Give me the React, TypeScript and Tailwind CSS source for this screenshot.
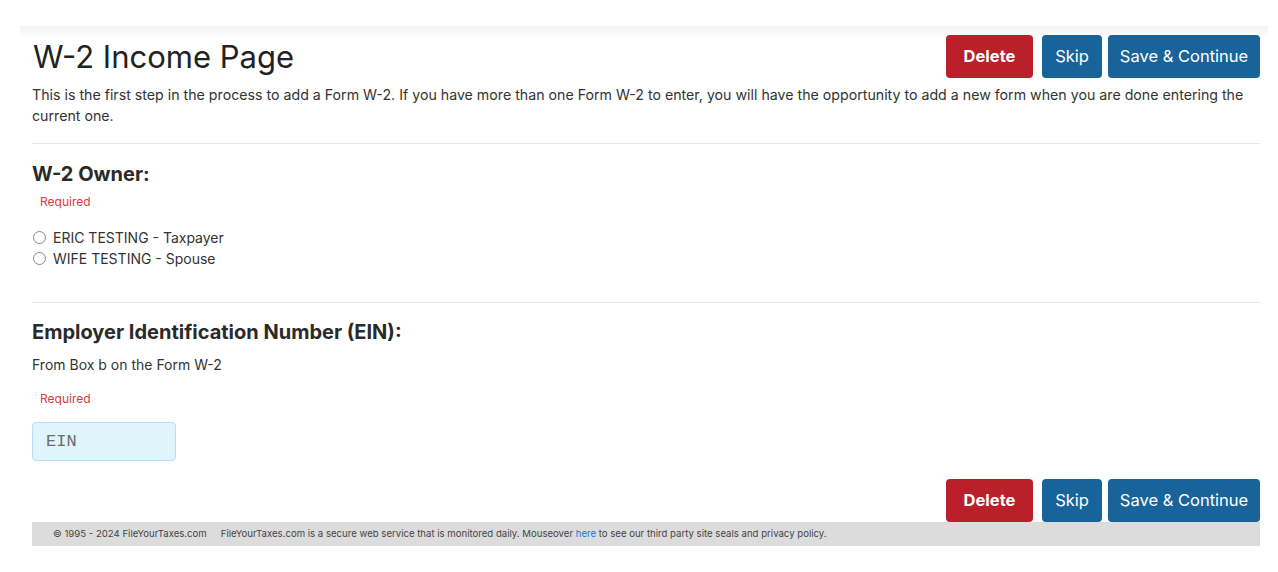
import React from "react";

function Btns() {
  return (
    <div className="flex items-center gap-[6px]">
      <button className="h-[43px] w-[87px] rounded-[4px] bg-[#b9202a] text-white font-bold text-[16.5px] mr-[3px]">Delete</button>
      <button className="h-[43px] w-[60px] rounded-[4px] bg-[#18649a] text-white text-[16.5px]">Skip</button>
      <button className="h-[43px] w-[152px] rounded-[4px] bg-[#18649a] text-white text-[16.5px]">Save &amp; Continue</button>
    </div>
  );
}

function Radio({ label }: { label: string }) {
  return (
    <label className="flex items-center h-[21px] text-[14px] text-[#333]">
      <span className="inline-block w-[13px] h-[13px] rounded-full border border-[#8a8a8a] bg-white ml-[1px] mr-[7px]" />
      {label}
    </label>
  );
}

export default function App() {
  return (
    <div className="bg-white w-[1278px] h-[572px] pt-[26px] pl-[20px] pr-[10px]" style={{ fontFamily: "Inter, 'Liberation Sans', sans-serif" }}>
      <div className="bg-gradient-to-b from-[#f2f2f2] to-white to-[12px] pl-[12px] pr-[8px] pt-[9px]">
        <div className="flex items-center justify-between">
          <h1 className="text-[31px] text-[#222] leading-[40px] pl-[1px]">W-2 Income Page</h1>
          <Btns />
        </div>
        <p className="mt-[6px] text-[14.2px] leading-[21px] text-[#333]">
          This is the first step in the process to add a Form W-2. If you have more than one Form W-2 to enter, you will have the opportunity to add a new form when you are done entering the current one.
        </p>
        <div className="mt-[17px] h-px bg-[#e6e6e6]" />
        <h2 className="mt-[18px] text-[20px] leading-[24px] font-bold text-[#2a2a2a]">W-2 Owner:</h2>
        <div className="mt-[8px] pl-[8px] text-[12px] leading-[16px] text-[#dc3545]">Required</div>
        <div className="mt-[17px]">
          <Radio label="ERIC TESTING - Taxpayer" />
          <Radio label="WIFE TESTING - Spouse" />
        </div>
        <div className="mt-[33px] h-px bg-[#e6e6e6]" />
        <h2 className="mt-[17px] text-[20px] leading-[24px] font-bold text-[#2a2a2a]">Employer Identification Number (EIN):</h2>
        <p className="mt-[10px] text-[14px] leading-[21px] text-[#333]">From Box b on the Form W-2</p>
        <div className="mt-[16px] pl-[8px] text-[12px] leading-[16px] text-[#dc3545]">Required</div>
        <input
          placeholder="EIN"
          className="mt-[15px] block w-[144px] h-[39px] rounded-[4px] border border-[#b3e0f5] bg-[#dff5fc] px-[13px] text-[17px] placeholder:text-[#6b6b6b] outline-none"
          style={{ fontFamily: "'Liberation Mono', 'DejaVu Sans Mono', monospace" }}
        />
        <div className="mt-[18px] flex justify-end">
          <Btns />
        </div>
        <div className="h-[24px] bg-[#dcdcdc] flex items-center pl-[21px] text-[9.6px] text-[#444]">
          <span>© 1995 - 2024 FileYourTaxes.com</span>
          <span className="ml-[14px]">
            FileYourTaxes.com is a secure web service that is monitored daily. Mouseover <span className="text-[#1a73e8]">here</span> to see our third party site seals and privacy policy.
          </span>
        </div>
      </div>
    </div>
  );
}
